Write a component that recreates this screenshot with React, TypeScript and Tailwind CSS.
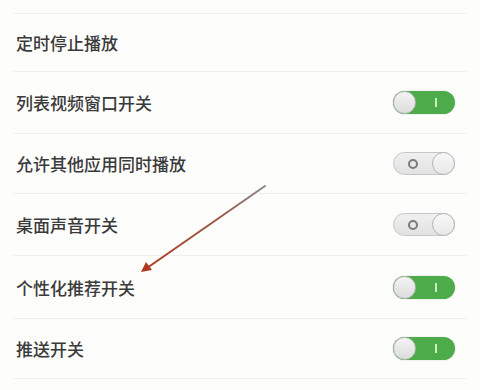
import React from "react";

function ToggleOn() {
  return (
    <div className="relative w-[62px] h-[23px] rounded-full bg-[#4dab4a] flex items-center shadow-[0_0_2px_rgba(0,0,0,0.15)]">
      <div className="w-[23px] h-[23px] rounded-full border border-[#b8b8b8] bg-gradient-to-b from-[#f4f4f4] to-[#dcdcdc] shrink-0" />
      <div className="flex-1 flex justify-center">
        <div className="w-[2px] h-[9px] bg-[#c9f0c0]" />
      </div>
    </div>
  );
}

function ToggleOff() {
  return (
    <div className="relative w-[62px] h-[23px] rounded-full bg-gradient-to-b from-[#f0f0f0] to-[#e2e2e2] border border-[#c6c6c6] flex items-center">
      <div className="flex-1 flex justify-center">
        <div className="w-[10px] h-[10px] rounded-full border-2 border-[#7a7a7a]" />
      </div>
      <div className="w-[23px] h-[23px] -mr-[1px] rounded-full border border-[#b5b5b5] bg-gradient-to-b from-[#f8f8f8] to-[#e8e8e8] shrink-0" />
    </div>
  );
}

function Row({ label, h, toggle }: { label: string; h: string; toggle?: "on" | "off" }) {
  return (
    <div className={`${h} mx-[13px] border-b border-[#f0f0ef] flex items-center justify-between pl-[3px] pr-[12px]`}>
      <span className="text-[17px] text-[#3a3a3a] font-medium leading-none" style={{ fontFamily: '"Noto Sans CJK SC", "Noto Sans", sans-serif' }}>
        {label}
      </span>
      {toggle === "on" && <ToggleOn />}
      {toggle === "off" && <ToggleOff />}
    </div>
  );
}

export default function App() {
  return (
    <div className="relative w-[480px] h-[390px] bg-[#fdfdfc] overflow-hidden">
      <div className="h-[14px] mx-[13px] border-b border-[#f0f0ef]" />
      <Row label="定时停止播放" h="h-[58px]" />
      <Row label="列表视频窗口开关" h="h-[62px]" toggle="on" />
      <Row label="允许其他应用同时播放" h="h-[60px]" toggle="off" />
      <Row label="桌面声音开关" h="h-[62px]" toggle="off" />
      <Row label="个性化推荐开关" h="h-[63px]" toggle="on" />
      <Row label="推送开关" h="h-[60px]" toggle="on" />
      <svg className="absolute left-0 top-0 pointer-events-none" width="480" height="390" viewBox="0 0 480 390">
        <defs>
          <linearGradient id="ag" x1="265" y1="186" x2="143" y2="271" gradientUnits="userSpaceOnUse">
            <stop offset="0" stopColor="#8a8a8a" />
            <stop offset="0.35" stopColor="#9a5a48" />
            <stop offset="1" stopColor="#b2391f" />
          </linearGradient>
        </defs>
        <line x1="265" y1="186" x2="147" y2="268" stroke="url(#ag)" strokeWidth="2" strokeLinecap="round" />
        <polygon points="141,272 146,262 152,270" fill="#b2391f" />
      </svg>
    </div>
  );
}
